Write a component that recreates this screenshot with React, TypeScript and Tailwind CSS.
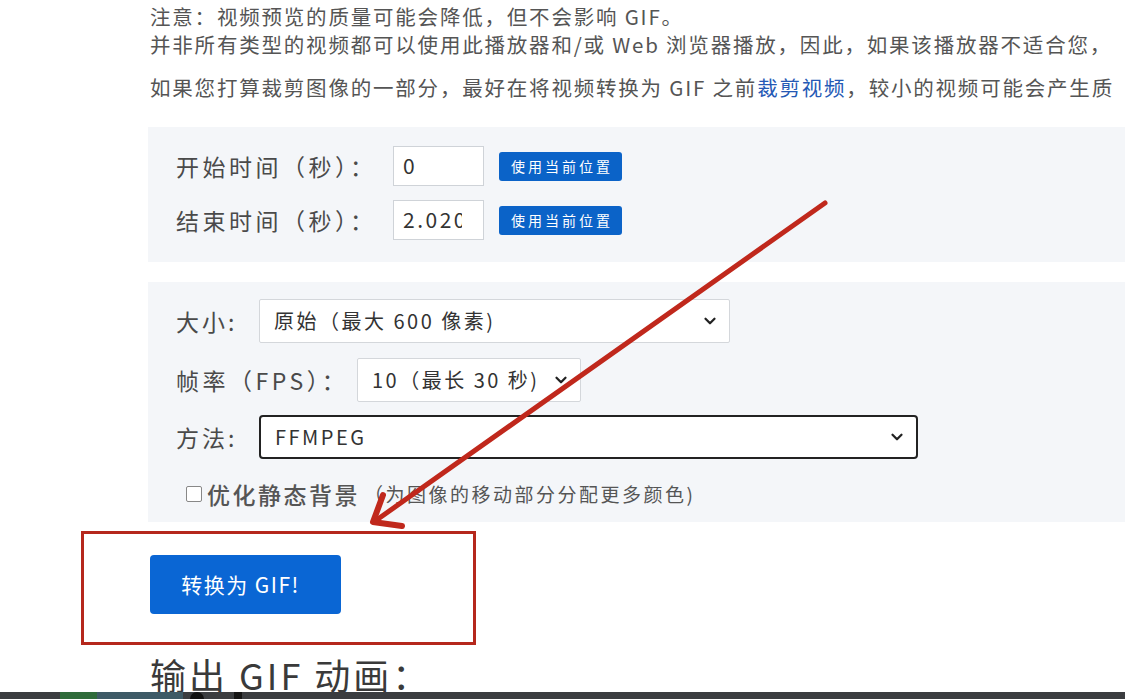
import { ChevronDown } from "lucide-react";

const font = {
  fontFamily: '"Microsoft YaHei", "Noto Sans CJK SC", "Noto Sans", sans-serif',
};

const TimeRow = ({ label, value }: { label: string; value: string }) => (
  <div className="flex items-center">
    <span className="w-[217px] text-[23px] tracking-[3.5px] text-[#4a4a4a] whitespace-nowrap">{label}</span>
    <div className="flex h-[40px] w-[91px] items-center border border-[#cfd3d8] bg-white pl-[9px]">
      <span className="w-[59px] overflow-hidden text-[21px] tracking-[2.5px] text-[#333] whitespace-nowrap">
        {value}
      </span>
    </div>
    <button className="ml-[15px] h-[29px] w-[123px] rounded-[3px] bg-[#0b63c8] pl-[3px] text-[14px] tracking-[3px] text-white whitespace-nowrap">
      使用当前位置
    </button>
  </div>
);

const SelectBox = ({
  value,
  width,
  focused,
}: {
  value: string;
  width: string;
  focused?: boolean;
}) => (
  <div
    className={`flex h-[44px] items-center justify-between bg-white pl-[14px] pr-[10px] text-[20px] tracking-[2.5px] text-[#333] whitespace-nowrap ${width} ${
      focused
        ? "rounded-[4px] border-2 border-[#222]"
        : "rounded-[2px] border border-[#d4d7db]"
    }`}
  >
    <span>{value}</span>
    <ChevronDown size={18} strokeWidth={3} className="shrink-0 text-[#222]" />
  </div>
);

export default function App() {
  return (
    <div className="relative h-[699px] w-full overflow-hidden bg-white" style={font}>
      <div className="pl-[148px]">
        <div className="pl-[2px] pt-[2px] text-[20.5px] tracking-[1.8px] text-[#555] whitespace-nowrap">
          <p className="leading-[28px]">注意：视频预览的质量可能会降低，但不会影响 GIF。</p>
          <p className="leading-[28px]">
            并非所有类型的视频都可以使用此播放器和/或 Web 浏览器播放，因此，如果该播放器不适合您，
          </p>
          <p className="mt-[15px] leading-[28px]">
            如果您打算裁剪图像的一部分，最好在将视频转换为 GIF 之前
            <span className="text-[#2559b5]">裁剪视频</span>
            ，较小的视频可能会产生质
          </p>
        </div>

        <div className="mt-[26px] flex h-[135px] flex-col gap-[14px] bg-[#f4f6f9] pl-[28px] pt-[19px]">
          <TimeRow label="开始时间（秒）：" value="0" />
          <TimeRow label="结束时间（秒）：" value="2.020" />
        </div>

        <div className="mt-[20px] flex h-[240px] flex-col bg-[#f4f6f9] pl-[28px] pt-[17px]">
          <div className="flex items-center">
            <span className="w-[83px] text-[23px] tracking-[3px] text-[#4a4a4a]">大小:</span>
            <SelectBox value="原始（最大 600 像素)" width="w-[471px]" />
          </div>
          <div className="mt-[15px] flex items-center">
            <span className="w-[181px] text-[23px] tracking-[3.5px] text-[#4a4a4a] whitespace-nowrap">帧率（FPS）：</span>
            <SelectBox value="10（最长 30 秒)" width="w-[224px]" />
          </div>
          <div className="mt-[13px] flex items-center">
            <span className="w-[83px] text-[23px] tracking-[3px] text-[#4a4a4a]">方法:</span>
            <SelectBox value="FFMPEG" width="w-[659px]" focused />
          </div>
          <div className="mt-[17px] flex h-[36px] items-center pl-[10px] whitespace-nowrap">
            <span className="h-[16px] w-[16px] shrink-0 rounded-[2px] border border-[#888] bg-white" />
            <span className="ml-[5px] text-[23px] font-medium tracking-[2.5px] text-[#555]">优化静态背景</span>
            <span className="ml-[4px] text-[19px] tracking-[2.5px] text-[#555]">（为图像的移动部分分配更多颜色)</span>
          </div>
        </div>

        <button className="ml-[2px] mt-[33px] h-[59px] w-[191px] rounded-[4px] bg-[#0a66d4] pr-[10px] text-[21px] tracking-[1.5px] text-white">
          转换为 GIF!
        </button>

        <h2 className="ml-[2px] mt-[40px] text-[36px] leading-[40px] tracking-[3px] text-[#3a3a3a] whitespace-nowrap">输出 GIF 动画：</h2>
      </div>

      {/* annotation overlay */}
      <div className="absolute left-[81px] top-[531px] h-[114px] w-[395px] border-[3px] border-[#b5271c]" />
      <svg className="pointer-events-none absolute left-0 top-0" width="1125" height="699">
        <line x1="825" y1="203" x2="378" y2="519" stroke="#c0281c" strokeWidth="5" strokeLinecap="round" />
        <polyline
          points="383,495 373,522 402,526"
          fill="none"
          stroke="#c0281c"
          strokeWidth="6"
          strokeLinecap="round"
          strokeLinejoin="round"
        />
      </svg>

      {/* taskbar strip */}
      <div className="absolute bottom-0 left-0 flex h-[7px] w-full bg-[#3b3d40]">
        <div className="ml-[60px] w-[37px] bg-[#2f6b3a]" />
        <div className="w-[86px] bg-[#3e5a66]" />
        <div className="ml-[7px] w-[14px] rounded-t-full bg-[#111]" />
        <div className="ml-[30px] w-[8px] bg-[#151515]" />
      </div>
    </div>
  );
}
